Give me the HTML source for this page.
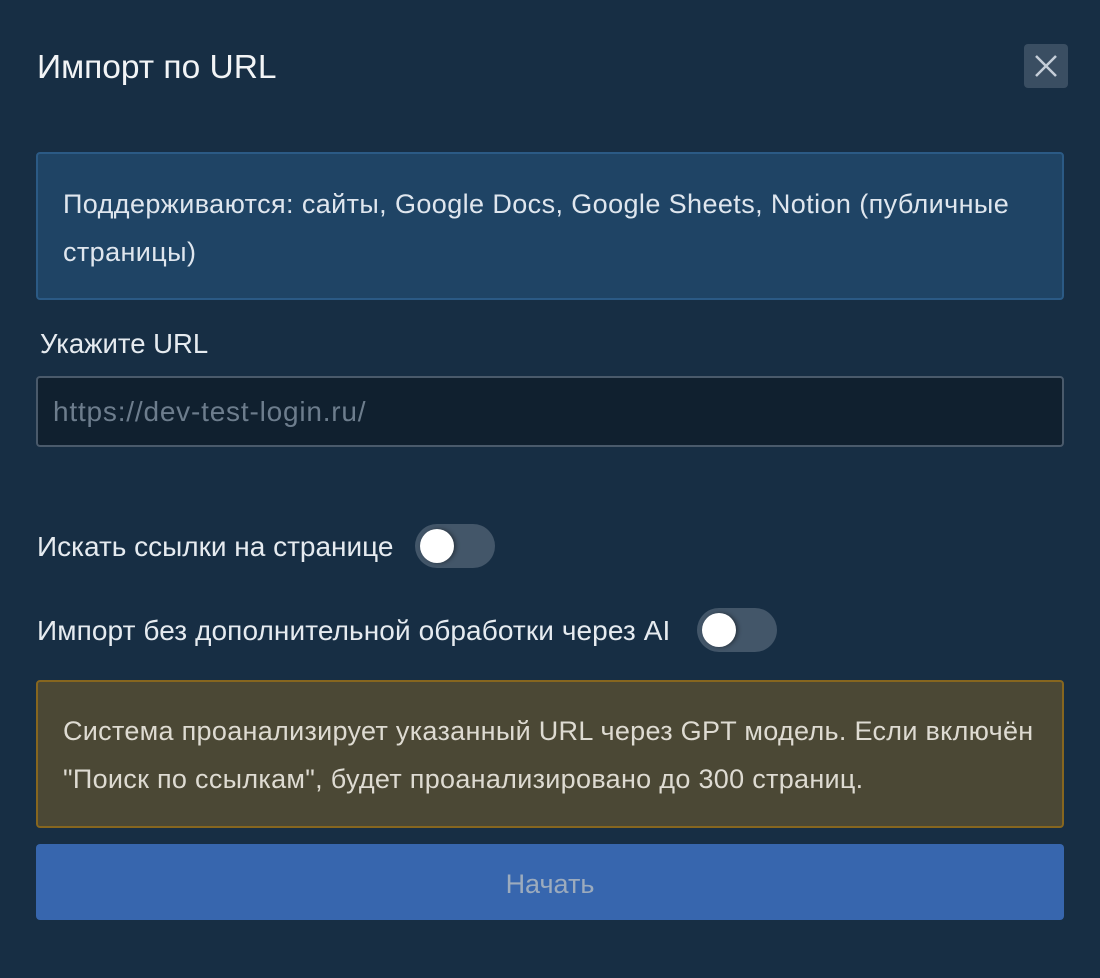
<!DOCTYPE html>
<html><head><meta charset="utf-8"><style>
*{box-sizing:border-box;margin:0;padding:0}
body{width:1100px;height:978px;background:#172e44;font-family:"Liberation Sans",sans-serif;color:#e6ebf0;position:relative;overflow:hidden}
.a{position:absolute}
.t{font-size:33.5px;left:37px;top:48px;line-height:40px;color:#f2f4f6}
.x{left:1024px;top:44px;width:44px;height:44px;background:#3a4e62;border-radius:4px}
.info{left:36px;top:152px;width:1028px;height:148px;background:#1f4465;border:2px solid #2b5a85;border-radius:4px;padding:26px 25px;font-size:27px;letter-spacing:0.4px;line-height:48px;color:#dfe6ee}
.lbl{left:40px;top:326px;font-size:27.5px;line-height:36px}
.inp{left:36px;top:376px;width:1028px;height:71px;background:#10202f;border:2px solid #4a5a6b;border-radius:4px;padding:0 15px;line-height:67px;font-size:28px;letter-spacing:0.8px;color:#6d7d8d}
.row{font-size:28px;left:37px;line-height:36px}
.tg{width:80px;height:44px;border-radius:22px;background:#435669}
.tg::after{content:"";position:absolute;left:5px;top:5px;width:34px;height:34px;border-radius:50%;background:#fff;box-shadow:2px 0 4px rgba(0,0,0,.4)}
.warn{left:36px;top:680px;width:1028px;height:148px;background:#4b4835;border:2px solid #86661f;border-radius:4px;padding:25px 25px;font-size:27px;letter-spacing:0.3px;line-height:48px;color:#dedbd2}
.btn{left:36px;top:844px;width:1028px;height:76px;background:#3766ae;border-radius:4px;text-align:center;line-height:80px;font-size:27px;color:#9cabbd}
</style></head><body>
<div class="a t">Импорт по URL</div>
<div class="a x"><svg width="44" height="44"><path d="M12 12L32 32M32 12L12 32" stroke="#c5ced8" stroke-width="2.5"/></svg></div>
<div class="a info">Поддерживаются: сайты, Google Docs, Google Sheets, Notion (публичные страницы)</div>
<div class="a lbl">Укажите URL</div>
<div class="a inp">https://dev-test-login.ru/</div>
<div class="a row" style="top:529px">Искать ссылки на странице</div>
<div class="a tg" style="left:415px;top:524px"></div>
<div class="a row" style="top:613px;letter-spacing:0.1px">Импорт без дополнительной обработки через AI</div>
<div class="a tg" style="left:697px;top:608px"></div>
<div class="a warn">Система проанализирует указанный URL через GPT модель. Если включён "Поиск по ссылкам", будет проанализировано до 300 страниц.</div>
<div class="a btn">Начать</div>
</body></html>
